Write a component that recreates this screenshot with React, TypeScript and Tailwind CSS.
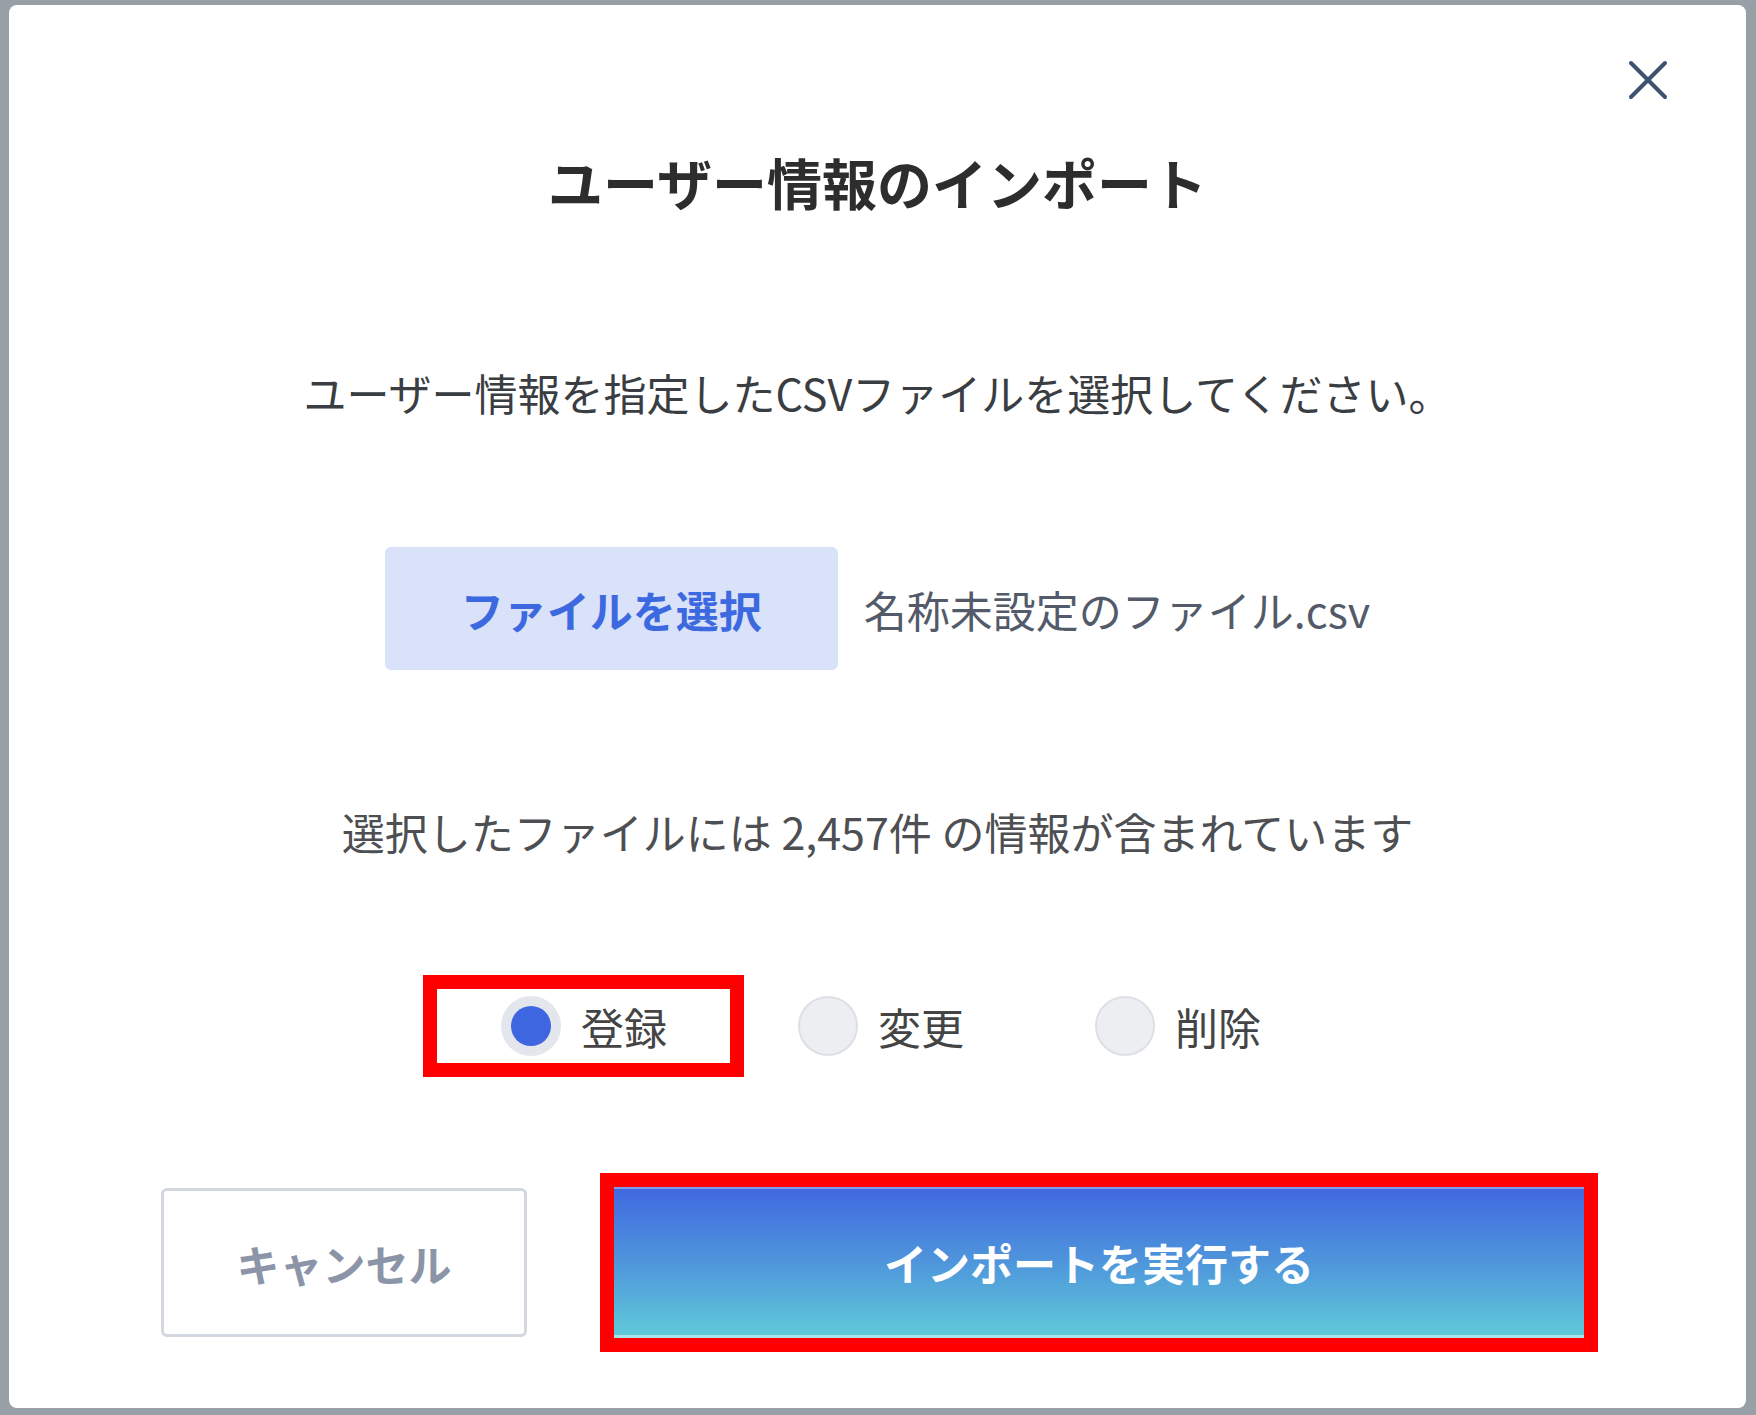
import React from "react";

function Radio({ checked }: { checked: boolean }) {
  if (checked) {
    return (
      <span className="w-[60px] h-[60px] rounded-full bg-[#e3e6ec] flex items-center justify-center shrink-0">
        <span className="w-[40px] h-[40px] rounded-full bg-[#3e66e1]" />
      </span>
    );
  }
  return <span className="w-[60px] h-[60px] rounded-full bg-[#eceef2] border-[2px] border-[#dde0e6] shrink-0" />;
}

export default function App() {
  return (
    <div className="w-[1756px] h-[1415px] bg-[#98a0a7] pt-[5px] pl-[9px] overflow-hidden font-['Noto_Sans_CJK_JP','Noto_Sans',sans-serif]">
      <div className="relative w-[1737px] h-[1403px] bg-white rounded-[8px] flex flex-col items-center">
        <button className="absolute top-[55px] right-[78px] w-[40px] h-[40px]" aria-label="close">
          <svg width="40" height="40" viewBox="0 0 40 40">
            <line x1="3" y1="3" x2="37" y2="37" stroke="#3f5170" strokeWidth="4" strokeLinecap="round" />
            <line x1="37" y1="3" x2="3" y2="37" stroke="#3f5170" strokeWidth="4" strokeLinecap="round" />
          </svg>
        </button>

        <h1 className="mt-[144px] text-[55px] leading-[64px] font-bold text-[#2d2d2d]">ユーザー情報のインポート</h1>

        <p className="mt-[154px] text-[43px] leading-[50px] text-[#3a3d42]">
          ユーザー情報を指定したCSVファイルを選択してください。
        </p>

        <div className="mt-[130px] flex items-center gap-[26px]">
          <button className="w-[453px] h-[123px] rounded-[6px] bg-[#d9e2f8] text-[#3c68e0] font-bold text-[43px] leading-[50px]">
            ファイルを選択
          </button>
          <span className="text-[43px] leading-[50px] text-[#535b6a]">名称未設定のファイル.csv</span>
        </div>

        <p className="mt-[136px] text-[43px] leading-[50px] text-[#4d4f53]">
          選択したファイルには 2,457件 の情報が含まれています
        </p>

        <div className="mt-[140px] flex items-center gap-[131px] pl-[7px]">
          <label className="relative flex items-center gap-[20px] h-[60px]">
            <Radio checked />
            <span className="text-[43px] leading-[50px] text-[#444]">登録</span>
            <span className="absolute top-[-21px] bottom-[-21px] left-[-78px] right-[-77px] border-[14px] border-[#ff0000]" />
          </label>
          <label className="flex items-center gap-[20px] h-[60px]">
            <Radio checked={false} />
            <span className="text-[43px] leading-[50px] text-[#444]">変更</span>
          </label>
          <label className="flex items-center gap-[20px] h-[60px]">
            <Radio checked={false} />
            <span className="text-[43px] leading-[50px] text-[#444]">削除</span>
          </label>
        </div>

        <div className="mt-[131px] self-stretch flex items-center pl-[152px] gap-[87px]">
          <button className="w-[366px] h-[149px] rounded-[6px] border-[3px] border-[#d3d8e0] bg-white text-[#8c95a8] font-bold text-[43px] leading-[50px]">
            キャンセル
          </button>
          <div className="relative">
            <button className="w-[970px] h-[151px] bg-linear-to-b from-[#4168e0] via-[#4f95db] to-[#5fcad8] border-t-[2px] border-t-[#7d9cea] border-b-[3px] border-b-[#a9e3ec] text-white font-bold text-[43px] leading-[50px]">
              インポートを実行する
            </button>
            <span className="absolute -inset-[14px] border-[14px] border-[#ff0000] pointer-events-none" />
          </div>
        </div>
      </div>
    </div>
  );
}
